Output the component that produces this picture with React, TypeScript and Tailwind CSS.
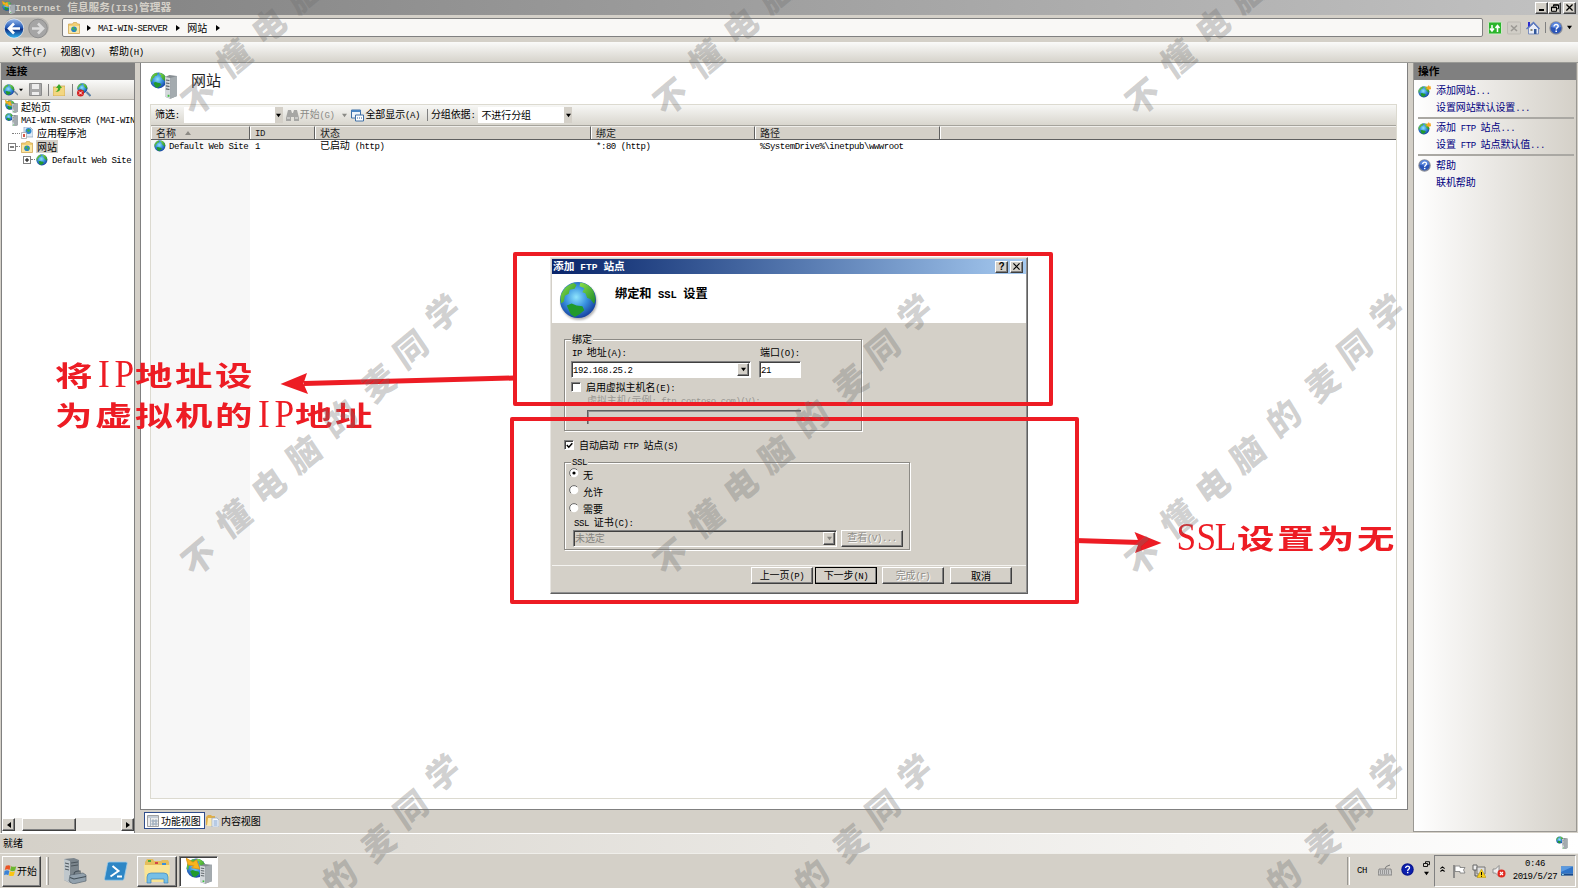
import React from "react";

type Size = "body" | "title" | "heading";

const cjkStyle: Record<Size, string> = {
  body: "text-[10px] tracking-[-0.1px]",
  title: "text-[10.7px] font-bold",
  heading: "text-[12.2px] font-bold",
};
const latinStyle: Record<Size, string> = {
  body: "text-[9px] tracking-[-0.45px]",
  title: "text-[9.5px] tracking-[0.1px] font-bold",
  heading: "text-[10.5px] tracking-[0.05px] font-bold",
};

/* Label mixing full-width and half-width runs on a fixed grid. */
function T({ s, size = "body", className = "" }: { s: string; size?: Size; className?: string }) {
  return (
    <span className={`whitespace-pre leading-none shrink-0 font-['Noto_Sans_CJK_SC',sans-serif] ${cjkStyle[size]} ${className}`}>
      {s.split(/([\x20-\x7e]+)/).map((part, i) =>
        i % 2 ? (
          <span key={i} className={`font-['Liberation_Mono',monospace] ${latinStyle[size]}`}>{part}</span>
        ) : (
          part
        )
      )}
    </span>
  );
}

function Globe({ className = "" }: { className?: string }) {
  return (
    <svg viewBox="0 0 40 40" className={`shrink-0 ${className}`}>
      <defs>
        <radialGradient id="sea" cx="0.45" cy="0.42" r="0.6">
          <stop offset="0" stopColor="#8fe4fc" />
          <stop offset="0.5" stopColor="#3a93e0" />
          <stop offset="1" stopColor="#153f9e" />
        </radialGradient>
        <linearGradient id="land" x1="0" y1="0" x2="1" y2="1">
          <stop offset="0" stopColor="#8be04a" />
          <stop offset="1" stopColor="#1c8a28" />
        </linearGradient>
      </defs>
      <circle cx="19.5" cy="19.5" r="18.5" fill="url(#sea)" />
      <path d="M2.500 13Q7 4 15 2l3 2-2 4-5 1-1 4-4 2-1 6-3 2q-1-6 .5-11z" fill="url(#land)" />
      <path d="M22 1.500q9 1 13.500 9l2 8-1.500 5-4-5-3-1-2-5-3-1 2-4-5-2z" fill="url(#land)" />
      <path d="M8 25l5-2 5 2 6 1 2 4-5 4-5 3-4-3z" fill="#219a2c" />
    </svg>
  );
}

function Tower({ className = "" }: { className?: string }) {
  return (
    <svg viewBox="0 0 14 24" preserveAspectRatio="none" className={`shrink-0 ${className}`}>
      <path d="M0 2l5-2 9 1v20l-8 3-6-2z" fill="#858c91" />
      <path d="M0 2l6 1v21l-6-2z" fill="#d3d8db" />
      <path d="M6 3l8-2v20l-8 3z" fill="#a4abaf" />
      <path d="M1 5l4 .6M1 8l4 .6M1 11l4 .6M1 14l4 .6" stroke="#565d62" strokeWidth="1.1" />
      <path d="M3 20h2v2H3z" fill="#3bc13b" />
    </svg>
  );
}

function ServerGlobe({ star = false, big = false, className = "" }: { star?: boolean; big?: boolean; className?: string }) {
  return (
    <span className={`relative block shrink-0 ${className}`}>
      <Globe className={`absolute left-0 top-0 ${big ? "h-[80%] w-[80%]" : "h-[64%] w-[64%]"}`} />
      <Tower className={`absolute right-0 bottom-0 ${big ? "h-[76%] w-[46%]" : "h-[88%] w-[46%]"}`} />
      {star && (
        <svg viewBox="0 0 10 10" className="absolute left-0 top-0 h-[54%] w-[54%]">
          <path d="M0 0l5 3 2.500-2L10 8 4 7l1.500-1.500L1.500 5z" fill="#f8b41c" stroke="#d98a0a" strokeWidth=".5" />
        </svg>
      )}
    </span>
  );
}

function SiteFolder({ className = "" }: { className?: string }) {
  return (
    <svg viewBox="0 0 12 12" className={`shrink-0 ${className}`}>
      <path d="M.5 2h4l1-1.500h3l1 1.500h2v9.500H.5z" fill="#f1cf74" stroke="#cda24a" strokeWidth=".7" />
      <path d="M1 4h10v7H1z" fill="#fae6a5" />
      <circle cx="6" cy="7.2" r="2.8" fill="#2983c8" />
      <path d="M4 6l2-1 .5 1.500L5 8.500zM7 7l1.500-.5-.5 2-1 .5z" fill="#49b837" />
    </svg>
  );
}

function NewGlobe() {
  return (
    <span className="relative block size-[13px] shrink-0">
      <Globe className="absolute left-0 bottom-0 size-[12px]" />
      <svg viewBox="0 0 6 6" className="absolute right-0 top-0 size-[5.5px]">
        <path d="M3 0l1 1.600L6 1.500 5 3l1 1.700-2-.2L3 6l-1-1.500-2 .2L1 3 0 1.500l2 .1z" fill="#f5a623" />
      </svg>
    </span>
  );
}

function Help({ flat = false, className = "" }: { flat?: boolean; className?: string }) {
  return (
    <svg viewBox="0 0 14 14" className={`shrink-0 ${className}`}>
      <circle cx="7" cy="7" r="6.7" fill={flat ? "#0a1690" : "#8b8f99"} />
      <circle cx="7" cy="7" r="5.5" fill={flat ? "#0b1fae" : "#2b55b8"} />
      {!flat && <path d="M2 6a5 5 0 0 1 10 0q-5 2-10 0z" fill="#5b86dc" />}
      <path d="M5 5.400c0-2.700 4.200-2.400 4.200-.2C9.200 6.700 7.200 6.600 7.200 8.500" fill="none" stroke="#fff" strokeWidth="1.4" />
      <path d="M6.400 9.500h1.600V11H6.400z" fill="#fff" />
    </svg>
  );
}

function Tri({ dir = "down", className = "" }: { dir?: "down" | "right" | "left" | "up"; className?: string }) {
  const d = { down: "M0 1h6L3 5z", right: "M1 0v6l4-3z", left: "M5 0v6L1 3z", up: "M0 5h6L3 1z" }[dir];
  return (
    <svg viewBox="0 0 6 6" className={`shrink-0 ${className}`}>
      <path d={d} fill="currentColor" />
    </svg>
  );
}

const raised = "border border-t-white border-l-white border-r-[#404040] border-b-[#404040] shadow-[inset_-1px_-1px_0_#808080] bg-[#d4d0c8]";
const sunken = "border border-t-[#808080] border-l-[#808080] border-r-white border-b-white shadow-[inset_1px_1px_0_#404040]";

function TitleBar() {
  return (
    <div className="flex h-[15px] items-center bg-linear-to-r from-[#808080] to-[#c2c2c2] pl-[2px]">
      <ServerGlobe star big className="h-[13px] w-[13px]" />
      <T s="Internet 信息服务(IIS)管理器" size="title" className="text-[#d4d0c8]" />
      <div className="ml-auto flex pr-[2px] text-black">
        <span className={`flex h-[12px] w-[13px] items-end justify-center pb-[2px] ${raised}`}><i className="h-[2px] w-[5px] bg-black" /></span>
        <span className={`flex h-[12px] w-[13px] items-center justify-center ${raised}`}>
          <svg viewBox="0 0 8 8" className="size-[8px]"><path d="M2.500 2.500V.8h5v4H6M.5 3h5v4.300H.5zM.5 3.600h5M2.500 1.200h5" fill="none" stroke="#000" /></svg>
        </span>
        <span className={`ml-[2px] flex h-[12px] w-[13px] items-center justify-center ${raised}`}>
          <svg viewBox="0 0 8 8" className="size-[7px]"><path d="M.5 .5l7 7M7.500 .5l-7 7" stroke="#000" strokeWidth="1.500" /></svg>
        </span>
      </div>
    </div>
  );
}

function AddressBar() {
  return (
    <div className="flex h-[27px] items-center bg-[#d4d0c8] pb-[2px] pl-[3px]">
      <svg viewBox="0 0 46 22" className="h-[22px] w-[46px] shrink-0">
        <defs>
          <linearGradient id="back" x1="0" y1="0" x2="0" y2="1">
            <stop offset="0" stopColor="#8fb4ea" />
            <stop offset=".45" stopColor="#2258b4" />
            <stop offset=".55" stopColor="#0c2f84" />
            <stop offset="1" stopColor="#35b5f0" />
          </linearGradient>
        </defs>
        <path d="M11 .5h25a10 10 0 0 1 0 20H11a10 10 0 0 1 0-20z" fill="#b9b7b2" />
        <circle cx="11" cy="11.500" r="10" fill="#dfe5ee" />
        <circle cx="11" cy="11.500" r="9.300" fill="url(#back)" />
        <path d="M17 11.500H6M11 6.500l-5 5 5 5" fill="none" stroke="#fff" strokeWidth="2.600" />
        <circle cx="35" cy="11.500" r="9.300" fill="#a5a5a5" stroke="#8e8e8e" />
        <path d="M29 11.500h11M35 6.500l5 5-5 5" fill="none" stroke="#dcdcdc" strokeWidth="2.600" />
      </svg>
      <div className="ml-[13px] flex h-[19px] w-[1421px] items-center rounded-[2px] border border-[#808080] bg-[#f9f8f6] pl-[5px]">
        <SiteFolder className="size-[12px]" />
        <Tri dir="right" className="ml-[6px] size-[6px]" />
        <T s="MAI-WIN-SERVER" className="ml-[6px]" />
        <Tri dir="right" className="ml-[8px] size-[6px]" />
        <T s="网站" className="ml-[6px]" />
        <Tri dir="right" className="ml-[8px] size-[6px]" />
      </div>
      <svg viewBox="0 0 14 14" className="ml-[5px] size-[14px] shrink-0">
        <rect x=".5" y="1" width="13" height="12" rx="1" fill="#2bb52b" stroke="#cfe9c9" />
        <path d="M4 4v5M2 7.500l2 2.500 2-2.500M9.500 11V6M7.500 7l2-2.500 2 2.500" stroke="#fff" strokeWidth="1.500" fill="none" />
      </svg>
      <svg viewBox="0 0 14 14" className="ml-[5px] size-[14px] shrink-0">
        <rect x=".5" y="1" width="13" height="12" rx="1" fill="#d0cdc6" stroke="#bdbab3" />
        <path d="M4 4.500l6 5.500M10 4.500L4 10" stroke="#9c9a95" strokeWidth="1.600" />
      </svg>
      <svg viewBox="0 0 14 14" className="ml-[5px] size-[14px] shrink-0">
        <path d="M2.500 7v6h10V7L7.500 2.500z" fill="#e9edf8" stroke="#7c8fbd" />
        <path d="M.5 8L7.500 1.500l6 6.500" fill="none" stroke="#5a78c0" strokeWidth="1.400" />
        <path d="M2 1h2v3.500L2 6z" fill="#2a2ad0" /><path d="M8 8h2.500v5H8z" fill="#33589b" /><path d="M4.500 8h2v2h-2z" fill="#8a8a7a" />
      </svg>
      <i className="ml-[5px] h-[11px] w-px bg-[#808080]" />
      <Help className="ml-[3px] size-[14px]" />
      <Tri className="ml-[4px] size-[5px]" />
    </div>
  );
}

function MenuBar() {
  return (
    <div className="flex h-[21px] items-center border-b border-[#9a9a96] bg-linear-to-b from-[#fafaf9] to-[#d6d3cb] pl-[12px]">
      <T s="文件(F)" className="w-[48.5px]" />
      <T s="视图(V)" className="w-[48.5px]" />
      <T s="帮助(H)" />
    </div>
  );
}

function TreeBox({ sign }: { sign: string }) {
  return (
    <svg viewBox="0 0 8 8" className="size-[8px] shrink-0">
      <rect x=".5" y=".5" width="7" height="7" fill="#fff" stroke="#808080" />
      <path d={sign === "+" ? "M2 4h4M4 2v4" : "M2 4h4"} stroke="#000" />
    </svg>
  );
}

function ConnectionsPane() {
  return (
    <div className="flex w-[134px] shrink-0 flex-col overflow-hidden border-x border-[#808080] bg-white">
      <div className="flex h-[17px] items-center bg-[#808080] pl-[4px]"><T s="连接" size="title" /></div>
      <div className="flex h-[20px] items-center border-b border-[#b5b2ab] bg-linear-to-b from-[#fafaf9] to-[#d9d6cf] pl-px">
        <Globe className="size-[12px]" />
        <svg viewBox="0 0 4 5" className="mb-[3px] -ml-px h-[5px] w-[4px] self-end"><path d="M0 0l4 4" stroke="#718496" strokeWidth="1.500" /></svg>
        <Tri className="ml-[1px] size-[4px]" />
        <svg viewBox="0 0 13 13" className="ml-[6px] size-[13px]"><path d="M.5 .5h12v12H.5z" fill="#a8a8a8" stroke="#8c8c8c" /><path d="M3 1h7v5H3zM3 9h7v3H3z" fill="#ededed" /></svg>
        <i className="ml-[6px] h-[12px] w-px bg-[#808080]" />
        <svg viewBox="0 0 12 12" className="ml-[4px] size-[12px]"><path d="M0 3h4l1-1h7v10H0z" fill="#f3d680" stroke="#c9a04a" strokeWidth=".7" /><path d="M2 8q3-1 3-4H3l3-4 3 4H7.500Q7.500 8 2 8z" fill="#3aa928" /></svg>
        <i className="ml-[7px] h-[12px] w-px bg-[#808080]" />
        <span className="relative ml-[4px] size-[14px]">
          <Globe className="absolute left-0 top-0 size-[11px]" />
          <svg viewBox="0 0 14 14" className="absolute inset-0 size-[14px]">
            <path d="M9.500 9l4 4" stroke="#5f83a8" strokeWidth="2" />
            <circle cx="3.500" cy="10" r="3.500" fill="#d52020" /><path d="M2 8.500l3 3M5 8.500l-3 3" stroke="#fff" />
          </svg>
        </span>
      </div>
      <div className="flex flex-1 flex-col">
        <div className="flex h-[13px] items-center pl-[3px]"><ServerGlobe star big className="h-[13px] w-[13px]" /><T s="起始页" className="ml-[3px]" /></div>
        <div className="flex h-[13px] items-center pl-[3px]"><ServerGlobe className="h-[13px] w-[13px]" /><T s="MAI-WIN-SERVER (MAI-WIN" className="ml-[3px]" /></div>
        <div className="flex h-[14px] items-center pl-[10px]">
          <i className="h-px w-[8px] border-t border-dotted border-[#808080]" />
          <svg viewBox="0 0 12 12" className="ml-px size-[12px]"><path d="M3 0h6l3 3v7H3z" fill="#dfeaf5" stroke="#87a1be" strokeWidth=".7" /><circle cx="7.500" cy="4" r="3" fill="#2b86cf" /><path d="M6 3l2-1 1 2-2 1z" fill="#45b22f" /><path d="M.5 5.500h5v6h-5z" fill="#fff" stroke="#9a9a9a" strokeWidth=".7" /><path d="M2 7h2v3H2z" fill="#d6584a" /></svg>
          <T s="应用程序池" className="ml-[4px]" />
        </div>
        <div className="flex h-[13px] items-center pl-[6px]">
          <TreeBox sign="-" />
          <i className="h-px w-[4px] border-t border-dotted border-[#808080]" />
          <SiteFolder className="ml-px size-[12px]" />
          <span className="ml-[3px] flex h-[13px] items-center bg-[#d4d0c8] px-px"><T s="网站" /></span>
        </div>
        <div className="flex h-[13px] items-center pl-[21px]">
          <TreeBox sign="+" />
          <i className="h-px w-[4px] border-t border-dotted border-[#808080]" />
          <Globe className="ml-px size-[12px]" />
          <T s="Default Web Site" className="ml-[4px]" />
        </div>
      </div>
      <div className="mb-[2px] flex h-[13px] bg-[#eae8e4]">
        <span className={`flex w-[13px] items-center justify-center ${raised}`}><Tri dir="left" className="size-[6px]" /></span>
        <span className={`ml-[7px] w-[54px] ${raised}`} />
        <span className={`ml-auto flex w-[13px] items-center justify-center ${raised}`}><Tri dir="right" className="size-[6px]" /></span>
      </div>
    </div>
  );
}

function DropButton({ className = "" }: { className?: string }) {
  return <span className={`ml-auto flex w-[8px] items-center justify-center bg-[#d4d0c8] ${className}`}><Tri className="size-[5px]" /></span>;
}

const columns = [
  { name: "名称", width: "w-[99px]", value: "Default Web Site" },
  { name: "ID", width: "w-[65px]", value: "1" },
  { name: "状态", width: "w-[276px]", value: "已启动 (http)" },
  { name: "绑定", width: "w-[164px]", value: "*:80 (http)" },
  { name: "路径", width: "w-[185px]", value: "%SystemDrive%\\inetpub\\wwwroot" },
];

function FeatureView() {
  return (
    <div className="ml-[5px] flex w-[1268px] shrink-0 flex-col">
      <div className="flex h-[747px] flex-col border border-t-0 border-[#808080] bg-white px-[9px] pb-[10px]">
        <div className="flex h-[41px] items-start pt-[9px]">
          <ServerGlobe className="h-[27px] w-[27px]" />
          <span className="ml-[14px] text-[15px] leading-none font-['Noto_Sans_CJK_SC',sans-serif] text-[#222]">网站</span>
        </div>
        <div className="flex w-[1247px] flex-1 flex-col border border-[#dcdad0]">
          <div className="flex h-[21px] items-center border-b border-[#a5a39c] bg-linear-to-b from-[#f7f7f5] to-[#d9d6ce] pl-[4px]">
            <T s="筛选:" />
            <span className="ml-[4px] flex h-[16px] w-[99px] bg-white"><DropButton /></span>
            <svg viewBox="0 0 13 13" className="ml-[3px] size-[13px]"><path d="M2 1h3l1 3h1l1-3h3l2 8v3H8V8H5v4H0V9z" fill="#a6a6a4" /><path d="M1 9h3M9 9h3" stroke="#ececea" /></svg>
            <T s="开始(G)" className="ml-px text-[#8a8a86]" />
            <Tri className="ml-[8px] size-[5px] text-[#8a8a86]" />
            <svg viewBox="0 0 13 13" className="ml-[4px] size-[13px]"><path d="M.5 1h9v8h-9z" fill="#eef4fa" stroke="#3f6fa5" /><path d="M.5 1h9v2h-9z" fill="#4b86c4" /><path d="M4.500 6h8v6h-8z" fill="#fff" stroke="#3f6fa5" /><path d="M6 9h1M8 9h1M10 9h1" stroke="#2c62a0" /></svg>
            <T s="全部显示(A)" className="ml-px" />
            <i className="ml-[7px] h-[12px] w-px bg-[#808080]" />
            <T s="分组依据:" className="ml-[3px]" />
            <span className="ml-[3px] flex h-[16px] w-[94px] items-center bg-white pl-[3px]"><T s="不进行分组" /><DropButton className="self-stretch" /></span>
          </div>
          <div className="flex h-[14px] border-b border-[#606060] bg-[#d4d0c8]">
            {columns.map((c, i) => (
              <span key={c.name} className={`flex shrink-0 items-center border-r border-t border-r-[#606060] border-t-[#efeeea] pl-[5px] shadow-[inset_1px_0_0_#fff] ${c.width}`}>
                <T s={c.name} className="text-[#1a1a1a]" />
                {i === 0 && <Tri dir="up" className="ml-[9px] size-[6px] text-[#8c8a84]" />}
              </span>
            ))}
            <span className="flex-1 border-t border-[#efeeea] shadow-[inset_1px_0_0_#fff]" />
          </div>
          <div className="flex flex-1">
            {columns.map((c, i) => (
              <div key={c.name} className={`flex shrink-0 flex-col ${c.width} ${i === 0 ? "bg-[#f7f7f7] pl-[3px]" : "pl-[5px]"}`}>
                <div className="flex h-[12px] items-center gap-[3px]">
                  {i === 0 && <Globe className="size-[12px]" />}
                  <T s={c.value} />
                </div>
              </div>
            ))}
          </div>
        </div>
      </div>
      <div className="flex items-center pt-[2px] pl-[4px]">
        <span className="flex h-[17px] w-[61px] items-center border border-[#2f4d8c] bg-white pl-[2px]">
          <svg viewBox="0 0 12 12" className="size-[12px]"><path d="M.5 .5h11v11H.5z" fill="#eee" stroke="#a0a0a0" /><path d="M1 1h10v2H1z" fill="#c4ccd6" /><path d="M3.500 3v8M5 5h2v2H5zM8 5h2v2H8zM5 8h2v2H5zM8 8h2v2H8z" stroke="#8d9db0" strokeWidth=".7" fill="#cfd8e2" /></svg>
          <T s="功能视图" className="ml-[2px]" />
        </span>
        <svg viewBox="0 0 13 13" className="ml-[1px] size-[13px]"><path d="M0 3l2-2h3l1 1h3v9H0z" fill="#dfae48" /><path d="M2 4h5v8H1z" fill="#fbe9b0" /><path d="M6 4h5l2 2v7H6z" fill="#f5f8fc" stroke="#92a6c0" strokeWidth=".7" /><path d="M7.500 7h4M7.500 9h4M7.500 11h4" stroke="#5c86c0" strokeWidth=".8" /></svg>
        <T s="内容视图" className="ml-[2px]" />
      </div>
    </div>
  );
}

function Action({ s, icon }: { s: string; icon?: React.ReactNode }) {
  return (
    <div className="flex h-[16.5px] items-center">
      <span className="flex w-[18px]">{icon}</span>
      <T s={s} className="text-[#000080]" />
    </div>
  );
}

function ActionsPane() {
  return (
    <div className="ml-[5px] flex h-[769px] w-[164px] shrink-0 flex-col border border-t-0 border-[#9a9893] bg-linear-to-r from-white to-[#d4d0c8]">
      <div className="flex h-[17px] items-center bg-[#808080] pl-[4px]"><T s="操作" size="title" /></div>
      <div className="flex flex-col pl-[4px] pr-[2px] pt-[3px]">
        <Action s="添加网站..." icon={<NewGlobe />} />
        <Action s="设置网站默认设置..." />
        <i className="my-px h-[2px] bg-[#aaa8a3]" />
        <Action s="添加 FTP 站点..." icon={<NewGlobe />} />
        <Action s="设置 FTP 站点默认值..." />
        <i className="my-px h-[2px] bg-[#aaa8a3]" />
        <Action s="帮助" icon={<Help className="size-[13px]" />} />
        <Action s="联机帮助" />
      </div>
    </div>
  );
}

function Taskbar() {
  return (
    <div className="flex h-[35px] items-center border-t border-[#efeeea] bg-[#d4d0c8] pl-[2px]">
      <span className={`flex h-[31px] w-[39px] items-center pb-px pl-px ${raised}`}>
        <svg viewBox="0 0 14 14" className="size-[13px]">
          <path d="M2 2q3-1.500 5 0L6 6.500Q3.500 5 .8 6.500z" fill="#ea5424" /><path d="M7.600 2.300q3 1.500 5.600 0L12 7q-3 1.500-5.400 0z" fill="#6cb52d" />
          <path d="M.6 7.500q2.800-1.500 5.200 0L4.700 12Q2.300 10.500 0 12z" fill="#3b83d6" /><path d="M6.400 7.800q2.600 1.500 5.400 0l-1.200 4.500q-3 1.500-5.300 0z" fill="#fbc412" />
        </svg>
        <T s="开始" />
      </span>
      <i className="ml-[5px] h-[28px] w-[3px] border-r border-l border-l-white border-r-[#9a9893]" />
      <svg viewBox="0 0 24 26" className="ml-[14px] h-[26px] w-[24px]">
        <path d="M1 1l10-1 5 2v20l-9 3-6-3z" fill="#7b858c" /><path d="M1 1l6 2v22l-6-3z" fill="#bfc7cc" />
        <path d="M2 5l4 1M2 8l4 1M2 11l4 1M8 5l7-1M8 8l7-1" stroke="#4c565d" />
        <path d="M7 17l13-2 3 2v6l-13 3-4-3z" fill="#92a1ad" stroke="#5c6973" strokeWidth=".7" />
        <path d="M11 16.500q0-4 6-3.500v2.500M7 19.500l4 1.500 12-2.500" fill="none" stroke="#434f58" strokeWidth="1.100" />
      </svg>
      <svg viewBox="0 0 24 20" className="ml-[17px] h-[20px] w-[24px]">
        <path d="M5 1h17q1.500 0 1.200 1.500L20 18q-.3 1.200-1.600 1.200H1.500Q.3 19 .6 17.500L3.600 2.200Q4 1 5 1z" fill="#2e86c5" stroke="#9ccbea" strokeWidth=".8" />
        <path d="M8.500 5l6 5-8 5.500M13 15.500h5" fill="none" stroke="#fff" strokeWidth="2" />
      </svg>
      <span className={`ml-[9px] flex h-[31px] w-[40px] items-center justify-center ${raised}`}>
        <svg viewBox="0 0 26 26" className="size-[26px]">
          <path d="M1 4l2-3h6l1 2h7l1-1h6l1 2v19H1z" fill="#e5be5c" /><path d="M0 7h26l-1 17H1z" fill="#f9e495" />
          <path d="M4 2h3v2H4z" fill="#4cab3c" /><path d="M11 4h3v2h-3z" fill="#d64545" /><path d="M18 5h4v2h-4z" fill="#3d8fd8" />
          <path d="M3 25v-6q0-4 4-4h13q4 0 4 4v6h-4v-4H7v4z" fill="#76bfe6" stroke="#3f86bb" strokeWidth=".7" />
        </svg>
      </span>
      <span className={`ml-[2px] flex h-[31px] w-[39px] items-center justify-center bg-white ${sunken}`}>
        <ServerGlobe star big className="h-[26px] w-[26px]" />
      </span>
      <i className="ml-auto h-[28px] w-[3px] border-r border-l border-l-[#9a9893] border-r-white" />
      <T s="CH" className="mb-[3px] ml-[7px]" />
      <svg viewBox="0 0 14 12" className="mb-[2px] ml-[11px] h-[12px] w-[14px]"><path d="M1 5h12l1 6H0z" fill="#c9c9c9" stroke="#777" strokeWidth=".8" /><path d="M2 7h10M2 9h10" stroke="#666" strokeDasharray="1 1" /><path d="M7 5q0-3 5-4" fill="none" stroke="#777" /></svg>
      <Help flat className="mb-[3px] ml-[9px] size-[13px]" />
      <span className="ml-[9px] flex flex-col items-center gap-[4px] self-start pt-[7px]">
        <svg viewBox="0 0 7 6" className="h-[6px] w-[7px]"><path d="M2.500 2V.7h4v3H5M.5 2.500h4v3h-4z" fill="none" stroke="#000" strokeWidth=".9" /></svg>
        <Tri className="size-[5px]" />
      </span>
      <div className="ml-[4px] mr-[2px] flex h-[32px] w-[142px] items-center border border-t-[#808080] border-l-[#808080] border-r-white border-b-white pb-px pl-[5px]">
        <svg viewBox="0 0 6 8" className="mb-[3px] h-[8px] w-[5px]"><path d="M.5 3.500l2.500-2 2.500 2M.5 7l2.500-2 2.500 2" fill="none" stroke="#000" strokeWidth="1.300" /></svg>
        <svg viewBox="0 0 14 14" className="ml-[7px] size-[14px]"><path d="M2 1v13" stroke="#777" strokeWidth="1.500" /><path d="M3 2h5v1.500h5L11.500 6l1.500 3H8V7.500H3z" fill="#fff" stroke="#777" strokeWidth=".8" /></svg>
        <svg viewBox="0 0 14 14" className="ml-[6px] size-[14px]"><path d="M1 1h4v5H1z" fill="#eee" stroke="#666" /><path d="M5 3h8v7H5z" fill="#ddd" stroke="#777" /><path d="M3 6v6h4" fill="none" stroke="#555" /><path d="M9.500 5l4.500 8.500H5z" fill="#f6cf1c" stroke="#b58e00" strokeWidth=".5" /><path d="M9.500 8v3M9.500 11.800v1" stroke="#000" /></svg>
        <svg viewBox="0 0 14 14" className="ml-[6px] size-[14px]"><path d="M1 5h2.500L7 1.500v11L3.500 9H1z" fill="#eee" stroke="#888" strokeWidth=".9" /><circle cx="9.500" cy="9.500" r="4" fill="#e02a20" /><path d="M8 8l3 3M11 8l-3 3" stroke="#fff" strokeWidth="1.200" /></svg>
        <span className="ml-[6px] flex w-[46px] flex-col items-center gap-[4px]"><T s="0:46" className="flex" /><T s="2019/5/27" className="flex" /></span>
        <svg viewBox="0 0 13 12" className="ml-[3px] h-[12px] w-[12px]"><path d="M0 1h13v8H0z" fill="#2f74c8" /><path d="M0 1h13L0 7z" fill="#5b9ae0" /><path d="M0 9h13v2H0z" fill="#174a8c" /><path d="M1 9.300h2v1H1z" fill="#9ef" /></svg>
      </div>
    </div>
  );
}

function Group({ label, className, children }: { label: string; className: string; children: React.ReactNode }) {
  return (
    <section className={`flex flex-col border border-[#8c8a85] shadow-[1px_1px_0_#fff,inset_1px_1px_0_#fff] ${className}`}>
      <span className="-mt-[7px] ml-[6px] flex h-[12px] items-center self-start bg-[#d4d0c8] px-px"><T s={label} /></span>
      {children}
    </section>
  );
}

function Btn({ s, disabled, primary, className = "" }: { s: string; disabled?: boolean; primary?: boolean; className?: string }) {
  return (
    <button className={`flex h-[17px] w-[62px] shrink-0 items-center justify-center ${raised} ${primary ? "outline-1 -outline-offset-1 outline-black" : ""} ${className}`}>
      <T s={s} className={disabled ? "text-[#8f8d88] [text-shadow:1px_1px_0_#fff]" : ""} />
    </button>
  );
}

function Radio({ s, on }: { s: string; on?: boolean }) {
  return (
    <div className="flex h-[17.300px] items-center">
      <svg viewBox="0 0 10 10" className="-mt-[3px] size-[10px]">
        <circle cx="5" cy="5" r="4.300" fill="#fff" />
        <path d="M1.900 8.100A4.300 4.300 0 0 1 8.100 1.900" fill="none" stroke="#6a6a6a" />
        {on && <circle cx="5" cy="5" r="1.600" />}
      </svg>
      <T s={s} className="ml-[4px]" />
    </div>
  );
}

function Dialog() {
  return (
    <div className="absolute left-[550px] top-[257px] flex h-[337px] w-[478px] flex-col border border-l-[#e8e6e2] border-t-[#e8e6e2] border-r-[#606060] border-b-[#606060] bg-[#d4d0c8] p-px shadow-[inset_-1px_-1px_0_#909090]">
      <div className="flex h-[15px] items-center bg-linear-to-r from-[#0a246a] to-[#a6caf0] pl-[1px] pr-[3px]">
        <T s="添加 FTP 站点" size="title" className="text-white" />
        <span className={`ml-auto flex h-[12px] w-[13px] items-center justify-center font-['Liberation_Sans',sans-serif] text-[10px] font-bold leading-none ${raised}`}>?</span>
        <span className={`ml-[2px] flex h-[12px] w-[13px] items-center justify-center ${raised}`}>
          <svg viewBox="0 0 8 8" className="size-[7px]"><path d="M.5 .5l7 7M7.500 .5l-7 7" stroke="#000" strokeWidth="1.400" /></svg>
        </span>
      </div>
      <div className="flex h-[49px] items-start bg-white pl-[7px] pt-[7px]">
        <Globe className="size-[39px] drop-shadow-[1px_2px_1px_rgba(0,0,0,0.3)]" />
        <T s="绑定和 SSL 设置" size="heading" className="ml-[17px] mt-[6px]" />
      </div>
      <div className="flex flex-1 flex-col items-start pl-[12px]">
        <Group label="绑定" className="mt-[16px] h-[92px] w-[298px]">
          <div className="mt-[2px] flex h-[12px] items-center pl-[7px]">
            <T s="IP 地址(A):" className="w-[188px]" />
            <T s="端口(O):" />
          </div>
          <div className="mt-[2px] flex h-[17px] pl-[6px]">
            <span className={`flex w-[180px] items-center bg-white py-px pr-px pl-px ${sunken}`}>
              <T s="192.168.25.2" />
              <span className={`ml-auto flex w-[12px] items-center justify-center self-stretch ${raised}`}><Tri className="size-[5px]" /></span>
            </span>
            <span className={`ml-[8px] flex w-[42px] items-center bg-white p-px ${sunken}`}><T s="21" /></span>
          </div>
          <div className="mt-[4px] flex h-[12px] items-center pl-[6px]">
            <i className={`mb-[2px] size-[10px] bg-white ${sunken}`} />
            <T s="启用虚拟主机名(E):" className="ml-[5px]" />
          </div>
          <div className="mt-[2px] flex h-[10px] items-center pl-[22px]"><T s="虚拟主机(示例: ftp.contoso.com)(V):" className="text-[#9a9893]" /></div>
          <span className="ml-[22px] mt-[4px] h-[14px] w-[214px] border-t border-l border-[#606060] shadow-[inset_1px_1px_0_#909090]" />
        </Group>
        <div className="mt-[8px] flex h-[14px] items-center">
          <span className={`mb-[2px] flex size-[10px] items-center justify-center bg-white ${sunken}`}>
            <svg viewBox="0 0 7 7" className="size-[7px]"><path d="M.8 3l2 2.200L6.300 1.200" fill="none" stroke="#000" strokeWidth="1.500" /></svg>
          </span>
          <T s="自动启动 FTP 站点(S)" className="ml-[5px]" />
        </div>
        <Group label="SSL" className="mt-[9px] h-[88px] w-[346px]">
          <div className="-mt-[2px] flex flex-col pl-[4px]">
            <Radio s="无" on />
            <Radio s="允许" />
            <Radio s="需要" />
          </div>
          <div className="-mt-px flex h-[12px] items-center pl-[9px]"><T s="SSL 证书(C):" /></div>
          <div className="mt-[1px] flex h-[17px] pl-[8px]">
            <span className={`flex w-[264px] items-center p-px ${sunken}`}>
              <T s="未选定" className="text-[#85837e]" />
              <span className={`ml-auto flex w-[12px] items-center justify-center self-stretch ${raised}`}><Tri className="size-[5px] text-[#85837e]" /></span>
            </span>
            <Btn s="查看(V)..." disabled className="ml-[4px]" />
          </div>
        </Group>
      </div>
      <div className="flex h-[27px] items-start border-t border-[#f4f3f0] pl-[199px] pt-px">
        <Btn s="上一页(P)" />
        <Btn s="下一步(N)" primary className="ml-[2px]" />
        <Btn s="完成(F)" disabled className="ml-[5px]" />
        <Btn s="取消" className="ml-[6px]" />
      </div>
    </div>
  );
}

/* Note text on a 40px grid: wide CJK cells, half-width serif Latin cells. */
function Note({ s }: { s: string }) {
  return (
    <div className="flex h-[40px] items-center leading-none">
      {[...s].map((ch, i) =>
        /[A-Z]/.test(ch) ? (
          <span key={i} className="mb-[3px] flex w-[20px] justify-center font-['Liberation_Serif',serif] text-[41px] leading-none"><span className="inline-block scale-x-[0.86]">{ch}</span></span>
        ) : (
          <span key={i} className="flex w-[40px] justify-center font-['Noto_Sans_CJK_SC',sans-serif] text-[27.5px] font-bold leading-none"><span className="inline-block scale-x-[1.360]">{ch}</span></span>
        )
      )}
    </div>
  );
}

function Annotations() {
  return (
    <div className="pointer-events-none absolute inset-0 text-[#ed1c24]">
      <div className="absolute left-[513px] top-[252px] h-[154px] w-[540px] rounded-[2px] border-4 border-[#ed1c24]" />
      <div className="absolute left-[510px] top-[417px] h-[187px] w-[569px] rounded-[2px] border-4 border-[#ed1c24]" />
      <svg viewBox="0 0 1578 888" className="absolute inset-0 h-[888px] w-[1578px]">
        <path d="M514 378L304 383.500M1075 540.500L1140 542.500" stroke="#ed1c24" strokeWidth="5" />
        <path d="M280.500 384L307 373l-3.500 10.500L308 394zM1161.500 543L1134.500 532l4.500 10.500L1135 553z" fill="#ed1c24" />
      </svg>
      <div className="absolute left-[54px] top-[355px]">
        <Note s="将IP地址设" />
        <Note s="为虚拟机的IP地址" />
      </div>
      <div className="absolute left-[1176px] top-[518px]"><Note s="SSL设置为无" /></div>
    </div>
  );
}

const glyphs = [
  ["不", 0, 0], ["懂", 35, -38], ["电", 70, -71], ["脑", 105, -103],
  ["的", 141, -139], ["麦", 180, -174], ["同", 212, -208], ["学", 244, -244],
] as const;

function Watermark() {
  return (
    <div className="pointer-events-none absolute inset-0 overflow-hidden">
      {[96, 556, 1016].map((y) =>
        [198, 670, 1142].map((x) =>
          glyphs
            .filter(([, , dy]) => y + dy > -18 && y + dy < 906)
            .map(([ch, dx, dy]) => (
              <span
                key={`${x}-${y}-${ch}`}
                className="absolute flex size-[36px] -rotate-[40deg] -skew-x-6 items-center justify-center font-['Noto_Sans_CJK_SC',sans-serif] text-[34px] font-black leading-none text-[#6d6d6d]/33"
                style={{ left: x + dx - 18, top: y + dy - 18 }}
              >
                {ch}
              </span>
            ))
        )
      )}
    </div>
  );
}

export default function App() {
  return (
    <div className="relative flex h-[888px] w-[1578px] flex-col overflow-hidden bg-[#d4d0c8] text-black">
      <TitleBar />
      <AddressBar />
      <MenuBar />
      <div className="flex h-[770px] items-stretch pl-px">
        <ConnectionsPane />
        <FeatureView />
        <ActionsPane />
      </div>
      <div className="flex h-[20px] items-center border-t border-white bg-linear-to-r from-[#d4d0c8] to-white pb-[2px] pl-[3px] pr-[10px]">
        <T s="就绪" />
        <ServerGlobe className="ml-auto h-[13px] w-[12px]" />
      </div>
      <Taskbar />
      <Dialog />
      <Annotations />
      <Watermark />
    </div>
  );
}
